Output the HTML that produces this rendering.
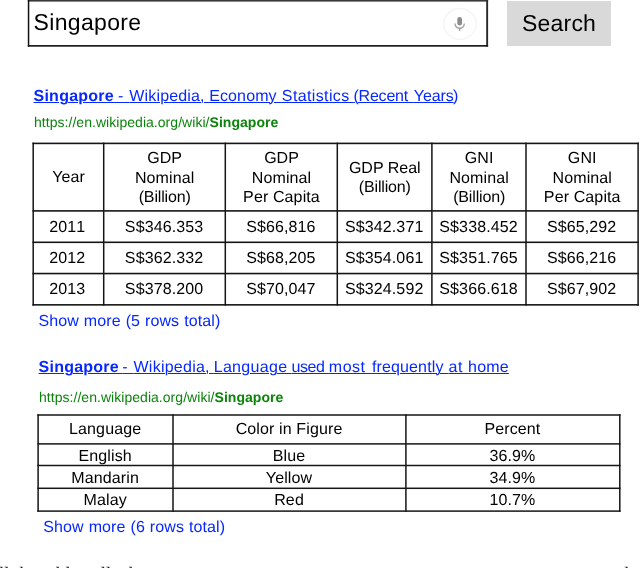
<!DOCTYPE html>
<html><head><meta charset="utf-8"><title>Singapore</title>
<style>
html,body{margin:0;padding:0;background:#fff;}
body{width:640px;height:568px;position:relative;overflow:hidden;}
#pg{position:absolute;left:0;top:0;width:640px;height:568px;overflow:hidden;background:#fff;will-change:transform;text-rendering:geometricPrecision;font-family:"Liberation Sans",Arial,Helvetica,sans-serif;color:#000;font-size:16px;line-height:20px;}
.abs{position:absolute;white-space:nowrap;height:20px;}
.btn{position:absolute;left:507.3px;top:0.9px;width:103.3px;height:45.2px;background:#d9d9d9;}
.t{color:#0628ff;text-decoration:none;display:block;}
.t u{text-decoration:underline;text-decoration-thickness:1.1px;text-underline-offset:1.1px;}
.u{color:#0c840c;letter-spacing:0.04px;}
.more{color:#0628ff;text-decoration:none;display:block;}
.grid{position:absolute;left:0;top:0;}
.c{position:absolute;width:200px;height:20px;text-align:center;white-space:nowrap;font-size:16px;letter-spacing:0.12px;}
</style></head><body><div id="pg">
<svg class="grid" width="640" height="50" viewBox="0 0 640 50"><rect x="28" y="0" width="460" height="46.5" fill="#fff"/><rect x="27.8" y="0" width="460.3" height="1.6" fill="#3a3a3a"/><rect x="486.2" y="0" width="1.9" height="46.7" fill="#2a2a2a"/><rect x="27.8" y="45" width="460.3" height="1.7" fill="#1e1e1e"/><rect x="27.8" y="0" width="1.5" height="46.7" fill="#111"/></svg>
<div class="abs q" style="left:33.5px;top:12px;font-size:23px;letter-spacing:0.35px;">Singapore</div>
<svg class="micsvg" width="40" height="40" viewBox="440 4 40 40" style="position:absolute;left:440px;top:4px"><ellipse cx="459.9" cy="23.9" rx="16.2" ry="15.4" fill="#fff" stroke="#f4f4f4" stroke-width="1.3"/><rect x="457.3" y="17" width="4.7" height="8.6" rx="2.35" fill="#8c8c8c"/><path d="M455 23.6 a4.65 4.65 0 0 0 9.3 0" fill="none" stroke="#a2a2a2" stroke-width="1.4"/><path d="M459.65 28 v2.9" stroke="#a2a2a2" stroke-width="1.5"/></svg>
<div class="btn"></div>
<div class="abs q" style="left:522px;top:13px;font-size:23px;letter-spacing:0.2px;">Search</div>

<a href="#" class="abs t" style="left:33.5px;top:87px;font-size:16px;"><u><span style="letter-spacing:0.249px;word-spacing:-0.683px"><b>Singapore </b></span><span style="letter-spacing:0.000px;word-spacing:1.479px">- </span><span style="letter-spacing:0.165px;word-spacing:-0.167px">Wikipedia, </span><span style="letter-spacing:0.124px;word-spacing:0.545px">Economy </span><span style="letter-spacing:0.373px;word-spacing:-0.969px">Statistics </span><span style="letter-spacing:-0.212px;word-spacing:1.542px">(Recent </span><span style="letter-spacing:-0.103px;word-spacing:0.000px">Years</span></u><span style="margin-left:-0.6px">)</span></a>
<div class="abs u" style="left:34px;top:112px;font-size:14px;">https://en.wikipedia.org/wiki/<b>Singapore</b></div>

<svg class="grid" width="640" height="568" viewBox="0 0 640 568" fill="#161616"><rect x="32.45" y="142.60" width="606.40" height="1.6"/><rect x="32.45" y="210.10" width="606.40" height="1.6"/><rect x="32.45" y="241.50" width="606.40" height="1.6"/><rect x="32.45" y="272.75" width="606.40" height="1.6"/><rect x="32.45" y="304.05" width="606.40" height="1.6"/><rect x="32.45" y="142.60" width="1.5" height="163.05"/><rect x="102.95" y="142.60" width="1.5" height="163.05"/><rect x="224.55" y="142.60" width="1.5" height="163.05"/><rect x="336.55" y="142.60" width="1.5" height="163.05"/><rect x="431.15" y="142.60" width="1.5" height="163.05"/><rect x="525.25" y="142.60" width="1.5" height="163.05"/><rect x="637.35" y="142.60" width="1.5" height="163.05"/></svg>
<div class="c" style="left:-31.35px;top:168px;">Year</div>
<div class="c" style="left:64.70px;top:149px;letter-spacing:0.0px;">GDP</div>
<div class="c" style="left:64.70px;top:169px;">Nominal</div>
<div class="c" style="left:64.70px;top:188px;letter-spacing:-0.15px;">(Billion)</div>
<div class="c" style="left:181.50px;top:149px;letter-spacing:0.0px;">GDP</div>
<div class="c" style="left:181.50px;top:169px;">Nominal</div>
<div class="c" style="left:181.50px;top:188px;">Per Capita</div>
<div class="c" style="left:284.80px;top:159px;letter-spacing:0.0px;">GDP Real</div>
<div class="c" style="left:284.80px;top:178px;letter-spacing:-0.15px;">(Billion)</div>
<div class="c" style="left:379.15px;top:149px;">GNI</div>
<div class="c" style="left:379.15px;top:169px;">Nominal</div>
<div class="c" style="left:379.15px;top:188px;letter-spacing:-0.15px;">(Billion)</div>
<div class="c" style="left:482.25px;top:149px;">GNI</div>
<div class="c" style="left:482.25px;top:169px;">Nominal</div>
<div class="c" style="left:482.25px;top:188px;">Per Capita</div>
<div class="c" style="left:-32.65px;top:218px;font-kerning:none;">2011</div>
<div class="c" style="left:64.10px;top:218px;">S$346.353</div>
<div class="c" style="left:180.90px;top:218px;">S$66,816</div>
<div class="c" style="left:284.20px;top:218px;">S$342.371</div>
<div class="c" style="left:378.55px;top:218px;">S$338.452</div>
<div class="c" style="left:481.65px;top:218px;">S$65,292</div>
<div class="c" style="left:-32.65px;top:249px;font-kerning:none;">2012</div>
<div class="c" style="left:64.10px;top:249px;">S$362.332</div>
<div class="c" style="left:180.90px;top:249px;">S$68,205</div>
<div class="c" style="left:284.20px;top:249px;">S$354.061</div>
<div class="c" style="left:378.55px;top:249px;">S$351.765</div>
<div class="c" style="left:481.65px;top:249px;">S$66,216</div>
<div class="c" style="left:-32.65px;top:280px;font-kerning:none;">2013</div>
<div class="c" style="left:64.10px;top:280px;">S$378.200</div>
<div class="c" style="left:180.90px;top:280px;">S$70,047</div>
<div class="c" style="left:284.20px;top:280px;">S$324.592</div>
<div class="c" style="left:378.55px;top:280px;">S$366.618</div>
<div class="c" style="left:481.65px;top:280px;">S$67,902</div>
<a href="#" class="abs more" style="left:38.5px;top:312px;font-size:16px;word-spacing:0.4px;letter-spacing:0.1px;">Show more (5 rows total)</a>

<a href="#" class="abs t" style="left:38.55px;top:358px;font-size:16px;"><u><span style="letter-spacing:0.243px;word-spacing:-1.420px"><b>Singapore </b></span><span style="letter-spacing:0.000px;word-spacing:1.479px">- </span><span style="letter-spacing:0.249px;word-spacing:-0.834px">Wikipedia, </span><span style="letter-spacing:0.315px;word-spacing:-0.707px">Language </span><span style="letter-spacing:-0.400px;word-spacing:0.273px">used </span><span style="letter-spacing:0.500px;word-spacing:1.385px">most </span><span style="letter-spacing:0.144px;word-spacing:0.322px">frequently </span><span style="letter-spacing:0.500px;word-spacing:0.319px">at </span><span style="letter-spacing:0.169px;word-spacing:0.000px">home</span></u></a>
<div class="abs u" style="left:39px;top:387px;font-size:14px;">https://en.wikipedia.org/wiki/<b>Singapore</b></div>

<svg class="grid" width="640" height="568" viewBox="0 0 640 568" fill="#161616"><rect x="37.35" y="414.25" width="583.20" height="1.5"/><rect x="37.35" y="443.15" width="583.20" height="1.5"/><rect x="37.35" y="464.75" width="583.20" height="1.5"/><rect x="37.35" y="487.55" width="583.20" height="1.5"/><rect x="37.35" y="510.35" width="583.20" height="1.5"/><rect x="37.35" y="414.25" width="1.5" height="97.60"/><rect x="172.25" y="414.25" width="1.5" height="97.60"/><rect x="405.15" y="414.25" width="1.5" height="97.60"/><rect x="619.05" y="414.25" width="1.5" height="97.60"/></svg>
<div class="c" style="left:5.15px;top:420px;">Language</div>
<div class="c" style="left:189.05px;top:420px;">Color in Figure</div>
<div class="c" style="left:412.45px;top:420px;">Percent</div>
<div class="c" style="left:5.15px;top:447px;">English</div>
<div class="c" style="left:189.05px;top:447px;">Blue</div>
<div class="c" style="left:412.45px;top:447px;">36.9%</div>
<div class="c" style="left:5.15px;top:469px;">Mandarin</div>
<div class="c" style="left:189.05px;top:469px;">Yellow</div>
<div class="c" style="left:412.45px;top:469px;">34.9%</div>
<div class="c" style="left:5.15px;top:491px;">Malay</div>
<div class="c" style="left:189.05px;top:491px;">Red</div>
<div class="c" style="left:412.45px;top:491px;">10.7%</div>
<a href="#" class="abs more" style="left:43.3px;top:518px;font-size:16px;word-spacing:0.4px;letter-spacing:0.1px;">Show more (6 rows total)</a>
<div class="abs cap" style="left:-1px;top:565px;font-size:19px;color:#222;font-family:'Liberation Serif',serif;">ll the table cells that a user can see as answers or rows are on one screen, as seen above.</div>
</div></body></html>
